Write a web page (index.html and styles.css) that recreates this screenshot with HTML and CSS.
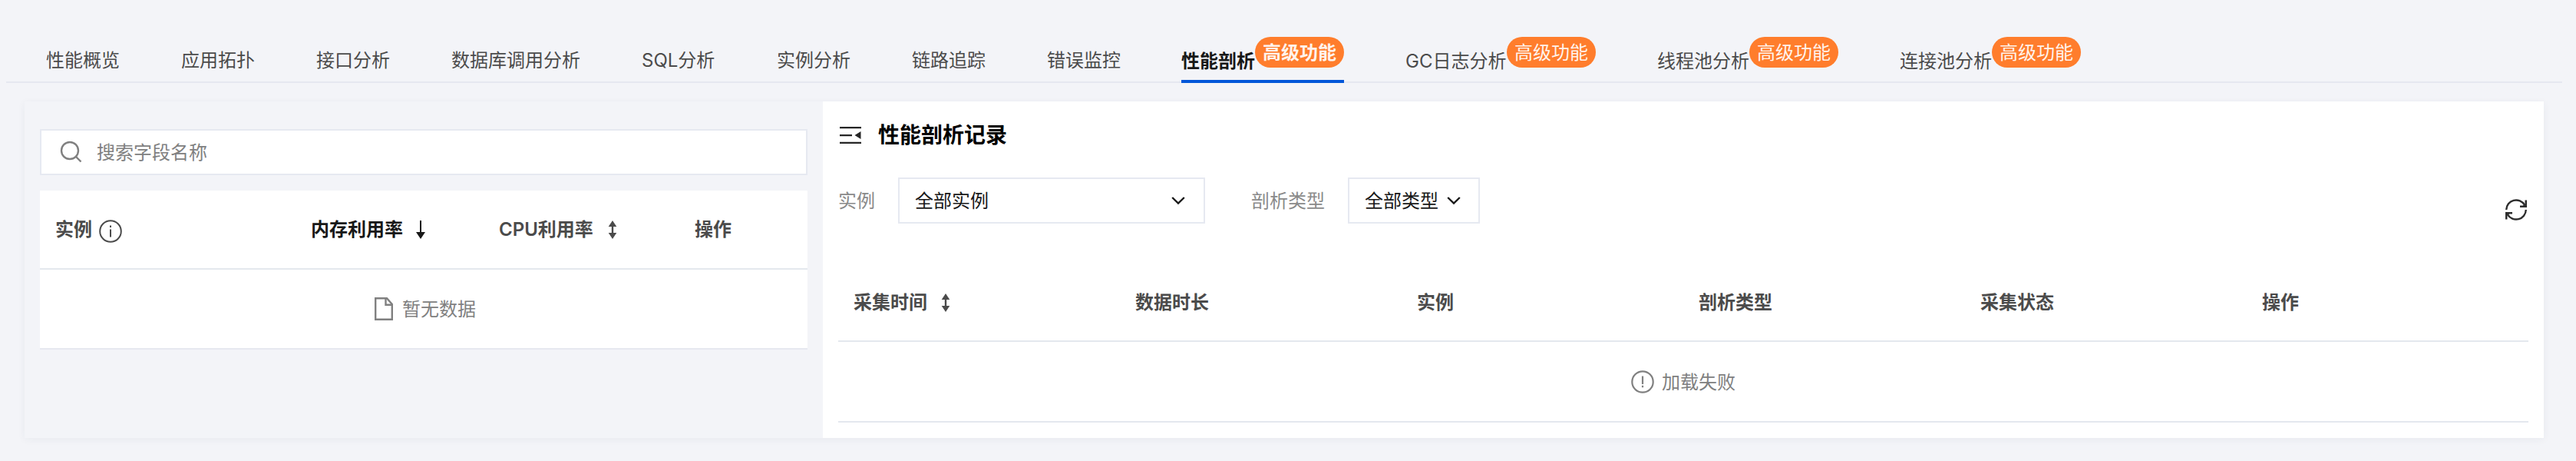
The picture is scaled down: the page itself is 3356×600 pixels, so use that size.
FILE: index.html
```
<!DOCTYPE html>
<html lang="zh-CN">
<head>
<meta charset="utf-8">
<title>性能剖析</title>
<link rel="stylesheet" href="styles.css">
</head>
<body>
<svg class="sprite" aria-hidden="true">
  <symbol id="sort" viewBox="0 0 12 24"><path d="M6 0l5.300 8H7.200v8h4.100L6 24 .7 16h4.100V8H.7z"/></symbol>
  <symbol id="chevron" viewBox="0 0 18 12"><path d="M1.200 2L9 9.500 16.800 2" fill="none" stroke="currentColor" stroke-width="2.400"/></symbol>
</svg>
<nav class="tabs">
  <a class="tab">性能概览</a>
  <a class="tab">应用拓扑</a>
  <a class="tab">接口分析</a>
  <a class="tab">数据库调用分析</a>
  <a class="tab tab-sql">SQL分析</a>
  <a class="tab">实例分析</a>
  <a class="tab">链路追踪</a>
  <a class="tab">错误监控</a>
  <a class="tab tab-pro active"><span class="name">性能剖析</span><span class="badge">高级功能</span></a>
  <a class="tab tab-pro"><span class="name name-gc">GC日志分析</span><span class="badge">高级功能</span></a>
  <a class="tab tab-pro"><span class="name">线程池分析</span><span class="badge">高级功能</span></a>
  <a class="tab tab-pro"><span class="name">连接池分析</span><span class="badge">高级功能</span></a>
</nav>
<main class="panel">
  <aside class="side">
    <div class="search">
      <svg class="search-icon" width="30" height="30" viewBox="0 0 30 30" fill="none" stroke="currentColor" stroke-width="2.400"><circle cx="13" cy="13" r="11"/><path d="M21 21l6.500 6.500"/></svg>
      <span class="text">搜索字段名称</span>
    </div>
    <div class="card">
      <div class="thead side-cols">
        <div class="th">实例<svg class="info" width="30" height="30" viewBox="0 0 30 30" fill="none" stroke="currentColor" stroke-width="2"><circle cx="15" cy="15" r="13.800"/><path d="M15 12.500v10M15 7.500v2.500"/></svg></div>
        <div class="th sorted">内存利用率<svg class="sort" width="12" height="24" viewBox="0 0 12 24"><path d="M5 0h2v15h5L6 24 0 15h5z"/></svg></div>
        <div class="th cpu">CPU利用率<svg class="sort" width="12" height="24"><use href="#sort"/></svg></div>
        <div class="th">操作</div>
      </div>
      <div class="empty">
        <svg class="doc" width="24" height="30" viewBox="0 0 24 30" fill="none" stroke="currentColor" stroke-width="2.400"><path d="M1.200 1.200H16L22.800 9v19.800H1.200z"/><path d="M14.500 1.200v8.600h8.300"/></svg>
        <span class="text">暂无数据</span>
      </div>
    </div>
  </aside>
  <section class="records">
    <header class="title">
      <svg width="28" height="24" viewBox="0 0 28 24"><path d="M0 1h28v2.200H0zM0 11h16v2.200H0zM0 20.800h28V23H0zM27.500 7v10L19.500 12z" fill="currentColor"/></svg>
      <h1>性能剖析记录</h1>
    </header>
    <div class="filters">
      <span class="label text">实例</span>
      <div class="select select-wide"><span class="text">全部实例</span><svg width="18" height="12"><use href="#chevron"/></svg></div>
      <span class="label text">剖析类型</span>
      <div class="select select-type"><span class="text">全部类型</span><svg width="18" height="12"><use href="#chevron"/></svg></div>
      <svg class="refresh" width="30" height="30" viewBox="0 0 30 30" fill="none" stroke="currentColor" stroke-width="2.400"><path d="M2.200 15A12.800 12.800 0 0 1 26 8.700M27.800 15A12.800 12.800 0 0 1 4 21.300"/><path fill="currentColor" stroke="none" d="M26.500 2.500H29v9.500H20V9.600h3.800l2.700-2.200zM3.500 27.500H1V18h9v2.400H6.200l-2.700 2.200z"/></svg>
    </div>
    <div class="table">
      <div class="thead record-cols">
        <div class="th">采集时间<svg class="sort" width="12" height="24"><use href="#sort"/></svg></div>
        <div class="th">数据时长</div>
        <div class="th">实例</div>
        <div class="th">剖析类型</div>
        <div class="th">采集状态</div>
        <div class="th">操作</div>
      </div>
      <div class="empty failed">
        <svg width="30" height="30" viewBox="0 0 30 30" fill="none" stroke="currentColor" stroke-width="2.200"><circle cx="15" cy="15" r="13.700"/><path d="M15 7.500v10.500M15 19.800v2.400"/></svg>
        <span class="text">加载失败</span>
      </div>
    </div>
  </section>
</main>
</body>
</html>
```

FILE: styles.css
```
* { box-sizing: border-box; }

body {
  margin: 0;
  height: 600px;
  background: #f3f4f8;
  color: #4b4b4b;
  font: 24px/36px Inter, "Noto Sans CJK SC", sans-serif;
  white-space: nowrap;
}

.sprite { position: absolute; width: 0; height: 0; }
svg { display: block; flex: none; }
.text { padding-top: 2px; }

.tabs {
  display: flex;
  gap: 80px;
  height: 108px;
  margin: 0 18px 0 8px;
  padding: 48px 0 0 52px;
  border-bottom: 2px solid #e6e8f0;
}
.tab { height: 60px; padding-top: 13px; }
.tab-sql { width: 96px; }
.tab-pro { display: flex; padding-top: 0; margin-left: -1px; }
.tab-pro + .tab-pro { margin-left: 0; }
.name { padding-top: 14px; width: 96px; }
.tab-pro:not(.active) .name { width: 120px; }
.tab-pro:not(.active) .name-gc { width: 132px; }
.active { border-bottom: 4px solid #0057d9; color: #181818; font-weight: 600; }
.badge {
  height: 40px;
  padding: 0 10px;
  border-radius: 20px;
  background: #ff7d2c;
  color: #fff3ec;
  line-height: 41px;
}

.panel {
  display: flex;
  width: 3282px;
  height: 438px;
  margin: 24px 0 0 32px;
  box-shadow: 0 2px 10px rgba(40, 50, 70, 0.05);
}

.side { width: 1040px; padding: 36px 20px; }
.search {
  display: flex;
  align-items: center;
  gap: 18px;
  height: 60px;
  padding-left: 24px;
  border: 2px solid #e6e9f1;
  background: #fff;
  color: #808080;
}
.card { margin-top: 20px; background: #fff; border-bottom: 2px solid #e6e8f0; }
.thead { display: grid; align-items: center; height: 103px; border-bottom: 2px solid #e4e8ee; font-weight: 600; }
.side-cols { grid-template-columns: 333px 246px 254px 1fr; }
.th { display: flex; align-items: center; padding-left: 20px; }
.info { margin: 4px 0 0 9px; }
.sorted { color: #181818; }
.sort { margin-left: 18px; fill: currentColor; }
.sorted .sort { margin-left: 17px; }
.cpu { padding-left: 19px; }
.cpu .sort { margin-left: 19px; }
.empty {
  display: flex;
  align-items: center;
  justify-content: center;
  gap: 12px;
  height: 102px;
  color: #808080;
  padding-left: 4px;
}

.records { flex: 1; padding: 26px 20px 0; background: #fff; }
.title { display: flex; align-items: center; gap: 22px; height: 36px; padding-left: 2px; color: #252525; }
.title h1 { margin: 0; color: #000; font-size: 28px; font-weight: 600; }
.filters { display: flex; align-items: center; height: 60px; margin-top: 37px; }
.label { color: #8a8a8a; }
.select {
  display: flex;
  align-items: center;
  height: 60px;
  border: 2px solid #e6e9f1;
  padding: 0 24px 0 20px;
  justify-content: space-between;
  color: #181818;
}
.select-wide { width: 400px; margin: 0 60px 0 30px; }
.select-type { width: 172px; margin-left: 30px; padding-right: 23px; }
.refresh { margin: 24px 1px 0 auto; color: #2d2d2d; }
.table { margin-top: 51px; border-bottom: 2px solid #e4e8ee; }
.record-cols { grid-template-columns: repeat(6, 1fr); padding-top: 2px; }
.failed { height: 103px; gap: 10px; padding: 1px 0 0; }
```
